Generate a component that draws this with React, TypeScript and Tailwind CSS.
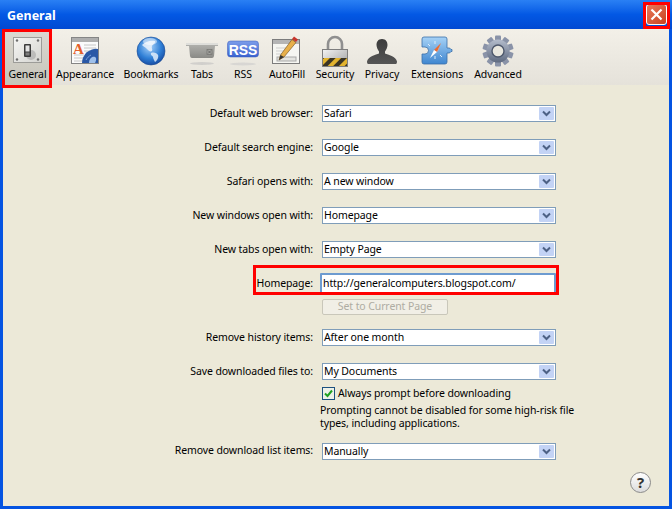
import React from 'react';

const font = "font-['Noto_Sans','DejaVu_Sans',sans-serif]";

const GeneralIcon = () => (
  <svg width="32" height="32" viewBox="0 0 32 32">
    <defs>
      <linearGradient id="gPlate" x1="0" y1="0" x2="1" y2="1">
        <stop offset="0" stopColor="#f6f6f4" />
        <stop offset="1" stopColor="#d4d4d0" />
      </linearGradient>
    </defs>
    <rect x="1.500" y="2.500" width="28" height="25" fill="url(#gPlate)" stroke="#9c9c98" />
    {[[5, 5.500], [26, 5.500], [5, 24.500], [26, 24.500]].map(([x, y]) => (
      <circle key={x * 100 + y} cx={x} cy={y} r="1.200" fill="#6e6e6e" />
    ))}
    <ellipse cx="19" cy="20" rx="5" ry="5" fill="#999" opacity="0.5" />
    <rect x="12" y="9" width="7" height="13" rx="1" fill="#3c3c3c" />
    <rect x="13.500" y="10.500" width="4" height="6" fill="#e4e4e4" />
    <rect x="13.500" y="17.500" width="4" height="3" fill="#7c7c7c" />
  </svg>
);

const AppearanceIcon = () => (
  <svg width="32" height="32" viewBox="0 0 32 32">
    <rect x="2.500" y="2.500" width="27" height="26" fill="#fbfbfb" stroke="#858585" />
    <rect x="3" y="3" width="26" height="4" fill="#aeaeae" />
    <path d="M15 10h12M15 13h12M15 16h6M5 20h10M5 23h9M5 26h9" stroke="#c6c6c6" />
    <text x="4" y="19" fontFamily="'Liberation Serif', serif" fontSize="15" fontWeight="700" fill="#e4602a">A</text>
    <path d="M13 28a14 14 0 0 1 16-14v14z" fill="#2a58a6" />
    <path d="M20 28c0-4 3-7 6-6 2 1 1 4 0 6z" fill="#9fc0ea" />
    <path d="M17 25c1-2 3-4 5-5" stroke="#7aa0dc" fill="none" />
  </svg>
);

const BookmarksIcon = () => (
  <svg width="32" height="32" viewBox="0 0 32 32">
    <defs>
      <radialGradient id="gGlobe" cx="0.45" cy="0.35" r="0.75">
        <stop offset="0" stopColor="#a8d2fa" />
        <stop offset="0.55" stopColor="#2f7fd6" />
        <stop offset="1" stopColor="#0e3a90" />
      </radialGradient>
    </defs>
    <circle cx="16" cy="16" r="14" fill="url(#gGlobe)" stroke="#1d4c94" strokeWidth="0.6" />
    <path d="M7 10c3-3 8-5 13-4 1 2-2 3-3 5s1 3 0 5c-2 1-3 0-5-2s-3-2-5-4z" fill="#eaf2fc" opacity="0.85" />
    <path d="M16 18c3-1 6 0 7 2s-1 6-3 7c-1-2-2-4-2-5s-3-2-2-4z" fill="#e2edfa" opacity="0.85" />
    <ellipse cx="15" cy="6.500" rx="7" ry="3.500" fill="#fff" opacity="0.5" />
  </svg>
);

const TabsIcon = () => (
  <svg width="32" height="32" viewBox="0 0 32 32">
    <defs>
      <linearGradient id="gTab" x1="0" y1="0" x2="0" y2="1">
        <stop offset="0" stopColor="#b4b4b0" />
        <stop offset="1" stopColor="#8a8a86" />
      </linearGradient>
    </defs>
    <path d="M0 8h32v3h-3l-1 10q-.3 2-2 2H6q-1.700 0-2-2L3 11H0z" fill="url(#gTab)" />
    <rect x="0" y="8" width="32" height="2" fill="#dededa" />
    <rect x="21" y="14.500" width="5" height="5" fill="#a4a4a0" stroke="#6c6c68" strokeWidth="0.6" />
    <path d="M22 15.500l3 3M25 15.500l-3 3" stroke="#555" strokeWidth="0.7" />
    <ellipse cx="16" cy="28.500" rx="12" ry="1.500" fill="#bbb" opacity="0.55" />
  </svg>
);

const RssIcon = () => (
  <svg width="32" height="32" viewBox="0 0 32 32">
    <defs>
      <linearGradient id="gRss" x1="0" y1="0" x2="0" y2="1">
        <stop offset="0" stopColor="#7d9eea" />
        <stop offset="1" stopColor="#3b62d0" />
      </linearGradient>
    </defs>
    <rect x="0.500" y="6" width="31" height="16" rx="3" fill="url(#gRss)" stroke="#3558bb" strokeWidth="0.5" />
    <text x="16" y="19.500" textAnchor="middle" fontFamily="'Liberation Sans', sans-serif" fontSize="14" fontWeight="700" fill="#fff">RSS</text>
    <ellipse cx="16" cy="29" rx="13" ry="1.500" fill="#ccc" opacity="0.6" />
  </svg>
);

const AutoFillIcon = () => (
  <svg width="32" height="32" viewBox="0 0 32 32">
    <rect x="1.500" y="4.500" width="27" height="24" fill="#f6f6f2" stroke="#7c7c7c" />
    <rect x="2" y="5" width="26" height="4" fill="#b5b5b5" />
    <path d="M5 13h12M5 16h9M5 19h7" stroke="#cfcfcf" />
    <rect x="6" y="22" width="19" height="4" fill="#e4e4e0" stroke="#a8a8a8" />
    <path d="M8 25l1.500-5L21 4.500l4 3L13 22z" fill="#e8b04a" stroke="#6b4a1a" strokeWidth="0.6" />
    <path d="M21 4l2-2.500 4 3-2 2.500z" fill="#c8362c" />
    <path d="M8 25l1.500-5 3.500 2z" fill="#333" />
  </svg>
);

const SecurityIcon = () => (
  <svg width="32" height="32" viewBox="0 0 32 32">
    <defs>
      <linearGradient id="gLock" x1="0" y1="0" x2="1" y2="1">
        <stop offset="0" stopColor="#f4f4f4" />
        <stop offset="1" stopColor="#9e9e9e" />
      </linearGradient>
      <pattern id="pHaz" width="8" height="8" patternUnits="userSpaceOnUse" patternTransform="rotate(45)">
        <rect width="8" height="8" fill="#e2b32e" />
        <rect width="4" height="8" fill="#3a3424" />
      </pattern>
    </defs>
    <path d="M9 15V9a7 7 0 0 1 14 0v6" fill="none" stroke="#8f8f8f" strokeWidth="2.600" />
    <rect x="3.500" y="14.500" width="25" height="17" fill="url(#gLock)" stroke="#7e7e7e" />
    <rect x="4" y="23" width="24" height="8" fill="url(#pHaz)" />
  </svg>
);

const PrivacyIcon = () => (
  <svg width="32" height="32" viewBox="0 0 32 32">
    <defs>
      <linearGradient id="gUser" x1="0" y1="0" x2="0" y2="1">
        <stop offset="0" stopColor="#3c3c3c" />
        <stop offset="1" stopColor="#555" />
      </linearGradient>
    </defs>
    <path d="M16 4c4 0 5.500 3 5.500 6 0 2.500-1.500 5-2.500 6.500v2c3 1.500 11 2.500 12 8 0 1.500-.5 2.500-1 2.500H2c-.5 0-1-1-1-2.500 1-5.500 9-6.500 12-8v-2C12 15 10.500 12.500 10.500 10c0-3 1.500-6 5.500-6z" fill="url(#gUser)" />
  </svg>
);

const ExtensionsIcon = () => (
  <svg width="32" height="32" viewBox="0 0 32 32">
    <defs>
      <linearGradient id="gExt" x1="0" y1="0" x2="0" y2="1">
        <stop offset="0" stopColor="#a6d2f6" />
        <stop offset="1" stopColor="#3f86d0" />
      </linearGradient>
    </defs>
    <path d="M1 4q0-2 2-2h21q2 0 2 2v9h2a2.500 2.500 0 0 1 2 1.500h1v2h-1a2.500 2.500 0 0 1-2 1.500h-2v9q0 2-2 2H3q-2 0-2-2v-8h3a3.500 3.500 0 0 0 0-7H1z" fill="url(#gExt)" stroke="#3a6ea8" strokeWidth="0.8" />
    <path d="M20 8l-7 7 3 2z" fill="#ee6a30" />
    <path d="M20 8l-4 9 1-1z" fill="#f6b090" />
    <path d="M9 23l4-8 3 2z" fill="#fff" />
    <path d="M14 6v3M14 21v3M7 9l2 2M19 20l2 2" stroke="#dcedfb" />
  </svg>
);

const AdvancedIcon = () => {
  const teeth = [0, 36, 72, 108, 144, 180, 216, 252, 288, 324];
  return (
    <svg width="32" height="32" viewBox="0 0 32 32">
      <defs>
        <linearGradient id="gGear" x1="0" y1="0" x2="0" y2="1">
          <stop offset="0" stopColor="#b4bccc" />
          <stop offset="1" stopColor="#5f6a80" />
        </linearGradient>
      </defs>
      {teeth.map((a) => (
        <rect key={a} x="13" y="0.500" width="6" height="7" rx="1" fill="#8a93a8" transform={`rotate(${a} 16 16)`} />
      ))}
      <circle cx="16" cy="16" r="11.500" fill="url(#gGear)" />
      <circle cx="16" cy="16" r="6" fill="#e9e7df" stroke="#4e586c" strokeWidth="1.400" />
    </svg>
  );
};

const tools = [
  { label: 'General', icon: <GeneralIcon />, width: 'w-[49px]' },
  { label: 'Appearance', icon: <AppearanceIcon />, width: 'w-[66px]' },
  { label: 'Bookmarks', icon: <BookmarksIcon />, width: 'w-[66px]' },
  { label: 'Tabs', icon: <TabsIcon />, width: 'w-[36px]' },
  { label: 'RSS', icon: <RssIcon />, width: 'w-[46px]' },
  { label: 'AutoFill', icon: <AutoFillIcon />, width: 'w-[42px]' },
  { label: 'Security', icon: <SecurityIcon />, width: 'w-[54px]' },
  { label: 'Privacy', icon: <PrivacyIcon />, width: 'w-[40px]' },
  { label: 'Extensions', icon: <ExtensionsIcon />, width: 'w-[70px]' },
  { label: 'Advanced', icon: <AdvancedIcon />, width: 'w-[52px]' },
];

const Row = ({ label, children }: { label: string; children: React.ReactNode }) => (
  <div className="flex items-center h-[17px] text-[10.5px] tracking-[-0.1px] text-black">
    <div className="w-[310px] shrink-0 text-right">{label}</div>
    <div className="ml-[9px] w-[234px]">{children}</div>
  </div>
);

const Select = ({ value }: { value: string }) => (
  <div className="flex items-center justify-between h-[17px] border border-[#7f9db9] bg-white pl-[1px] pr-px">
    <span className="leading-none">{value}</span>
    <span className="flex items-center justify-center w-[15px] h-[13px] rounded-[1px] bg-[#c3d3f5]">
      <svg width="9" height="7" viewBox="0 0 9 7">
        <path d="M1 1.500l3.500 3.500L8 1.500" fill="none" stroke="#4d6185" strokeWidth="2" />
      </svg>
    </span>
  </div>
);

export default function App() {
  return (
    <div className={`${font} relative w-[672px] h-[509px] overflow-hidden bg-[#0454e2] flex flex-col`}>
      {/* title bar */}
      <div className="h-[29px] shrink-0 flex items-center justify-between pl-[7px] pr-[5px] bg-gradient-to-b from-[#2a80f4] via-[#0358e4] to-[#0149d2]">
        <span className="pt-[3px] text-[12.5px] font-bold text-white">General</span>
        <div className="flex items-center justify-center w-[21px] h-[21px] rounded-[3px] border border-white bg-gradient-to-br from-[#e8795a] to-[#c9411c]">
          <svg width="13" height="13" viewBox="0 0 13 13">
            <path d="M1.500 1.500l10 10M11.500 1.500l-10 10" stroke="#fff" strokeWidth="2.200" />
          </svg>
        </div>
      </div>

      <div className="mx-[3px] mb-[3px] flex-1 flex flex-col bg-[#ece9d8] relative">
        {/* toolbar */}
        <div className="h-[56px] shrink-0 flex items-start bg-gradient-to-b from-[#f3f0e8] to-[#e5e2da]">
          {tools.map((t) => (
            <div
              key={t.label}
              className={`${t.width} h-full pt-[6px] flex flex-col items-center text-[10.5px] tracking-[-0.1px] text-black ${t.label === 'General' ? 'bg-gradient-to-b from-[#dcdad2] to-[#c6c4ba]' : ''}`}
            >
              <div className="h-[32px]">{t.icon}</div>
              <span className="leading-[14px] whitespace-nowrap">{t.label}</span>
            </div>
          ))}
        </div>

        {/* preferences */}
        <div className="flex flex-col pt-[20px]">
          <div className="flex flex-col gap-[17px]">
            <Row label="Default web browser:"><Select value="Safari" /></Row>
            <Row label="Default search engine:"><Select value="Google" /></Row>
            <Row label="Safari opens with:"><Select value="A new window" /></Row>
            <Row label="New windows open with:"><Select value="Homepage" /></Row>
            <Row label="New tabs open with:"><Select value="Empty Page" /></Row>
            <Row label="Homepage:">
              <div className="h-[21px] w-[236px] -ml-[2px] flex items-center border-2 border-[#6d9bd0] bg-white pl-px rounded-[1px]">
                http://generalcomputers.blogspot.com/
              </div>
            </Row>
          </div>
          <div className="ml-[319px] mt-[7px] w-[126px] h-[16px] flex items-center justify-center rounded-[2px] border border-[#c9c7ba] bg-[#f1efe6] text-[10.5px] tracking-[-0.1px] text-[#aeaca2]">
            Set to Current Page
          </div>
          <div className="flex flex-col gap-[17px] mt-[14px]">
            <Row label="Remove history items:"><Select value="After one month" /></Row>
            <Row label="Save downloaded files to:"><Select value="My Documents" /></Row>
          </div>
          <div className="ml-[319px] mt-[6px] flex items-center gap-[3px] text-[10.5px] tracking-[-0.1px] text-black">
            <span className="flex items-center justify-center w-[13px] h-[13px] border border-[#1c5180] bg-[#eef1e8]">
              <svg width="9" height="9" viewBox="0 0 9 9">
                <path d="M1 4.500l2.500 2.500L8 1.500" fill="none" stroke="#21a121" strokeWidth="2" />
              </svg>
            </span>
            <span>Always prompt before downloading</span>
          </div>
          <div className="ml-[317px] mt-[2px] w-[262px] text-[10.5px] tracking-[-0.1px] leading-[13px] text-black">
            Prompting cannot be disabled for some high-risk file types, including applications.
          </div>
          <div className="mt-[13px]">
            <Row label="Remove download list items:"><Select value="Manually" /></Row>
          </div>
        </div>

        {/* help button */}
        <div className="absolute right-[18px] bottom-[13px] flex items-center justify-center w-[21px] h-[21px] rounded-full border border-[#8a8a8a] bg-gradient-to-b from-white to-[#dcdcdc] text-[15px] font-bold text-[#333]">
          ?
        </div>
      </div>

      {/* red annotations */}
      <div className="absolute left-[2px] top-[29px] w-[50px] h-[59px] border-[3px] border-[#ff0000]" />
      <div className="absolute left-[643px] top-[2px] w-[27px] h-[27px] border-[3px] border-[#ff0000]" />
      <div className="absolute left-[253px] top-[265px] w-[306px] h-[30px] border-[3px] border-[#ff0000]" />
    </div>
  );
}
